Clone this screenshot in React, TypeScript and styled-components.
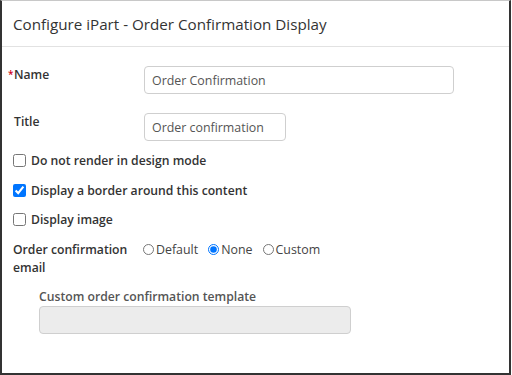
import React from "react";
import styled, { createGlobalStyle } from "styled-components";

const GlobalStyle = createGlobalStyle`
  html, body {
    margin: 0;
    padding: 0;
    background: #ffffff;
  }
  body {
    font-family: "Open Sans", "Liberation Sans", sans-serif;
    color: #333;
  }
`;

const Panel = styled.div`
  box-sizing: border-box;
  width: 511px;
  height: 375px;
  border-top: 1px solid #c8c8c8;
  border-left: 2px solid #333;
  border-right: 2px solid #333;
  border-bottom: 2px solid #333;
  background: #fff;
`;

const Header = styled.div`
  height: 45px;
  display: flex;
  align-items: center;
  padding: 0 11px;
  border-bottom: 1px solid #e2e2e2;
  font-size: 15.2px;
  color: #333;
`;

const Body = styled.div`
  padding: 19px 11px 0 11px;
  display: flex;
  flex-direction: column;
`;

const FieldRow = styled.div<{ $gap?: number; $top?: number }>`
  display: grid;
  grid-template-columns: 131px 1fr;
  align-items: start;
  margin-top: ${(p) => p.$top ?? 0}px;
  margin-bottom: ${(p) => p.$gap ?? 0}px;
`;

const Label = styled.label<{ $flush?: boolean }>`
  font-size: 12.2px;
  font-weight: 600;
  color: #333;
  line-height: 18px;
  padding-left: ${(p) => (p.$flush ? 0 : 1)}px;
  position: relative;
`;

const Required = styled.span`
  position: absolute;
  left: -5px;
  top: -1px;
  color: #d0021b;
  font-size: 10px;
`;

const TextInput = styled.input<{ $width: number }>`
  box-sizing: border-box;
  width: ${(p) => p.$width}px;
  height: 28px;
  border: 1px solid #cfcfcf;
  border-radius: 4px;
  padding: 0 7px;
  font-family: inherit;
  font-size: 12.4px;
  color: #555;
  background: #fff;
  outline: none;
`;

const CheckRow = styled.label`
  display: flex;
  align-items: center;
  gap: 5px;
  height: 29.5px;
  font-size: 12.2px;
  font-weight: 600;
  color: #333;

  input {
    margin: 0;
    width: 13px;
    height: 13px;
  }
`;

const RadioGroup = styled.div`
  display: flex;
  align-items: center;
  gap: 10px;
  height: 18px;
  margin-left: -1px;
`;

const RadioOption = styled.label`
  display: flex;
  align-items: center;
  gap: 2px;
  font-size: 12.4px;
  color: #444;

  input {
    margin: 0;
    width: 11px;
    height: 11px;
  }
`;

const SubSection = styled.div`
  padding-left: 26px;
  margin-top: 11px;
  display: flex;
  flex-direction: column;
  gap: 1px;
`;

const SubLabel = styled.div`
  font-size: 12.2px;
  font-weight: 600;
  color: #555;
`;

const DisabledInput = styled.div`
  box-sizing: border-box;
  width: 312px;
  height: 28px;
  border: 1px solid #cfcfcf;
  border-radius: 4px;
  background: #ececec;
`;

const App = () => {
  return (
    <>
      <GlobalStyle />
      <Panel>
        <Header>Configure iPart - Order Confirmation Display</Header>
        <Body>
          <FieldRow $gap={19}>
            <Label>
              <Required>*</Required>Name
            </Label>
            <TextInput $width={310} defaultValue="Order Confirmation" />
          </FieldRow>
          <FieldRow $gap={5}>
            <Label>Title</Label>
            <TextInput $width={142} defaultValue="Order confirmation" />
          </FieldRow>
          <CheckRow>
            <input type="checkbox" />
            Do not render in design mode
          </CheckRow>
          <CheckRow>
            <input type="checkbox" defaultChecked />
            Display a border around this content
          </CheckRow>
          <CheckRow>
            <input type="checkbox" />
            Display image
          </CheckRow>
          <FieldRow $top={6}>
            <Label $flush>
              Order confirmation
              <br />
              email
            </Label>
            <RadioGroup>
              <RadioOption>
                <input type="radio" name="email" />
                Default
              </RadioOption>
              <RadioOption>
                <input type="radio" name="email" defaultChecked />
                None
              </RadioOption>
              <RadioOption>
                <input type="radio" name="email" />
                Custom
              </RadioOption>
            </RadioGroup>
          </FieldRow>
          <SubSection>
            <SubLabel>Custom order confirmation template</SubLabel>
            <DisabledInput />
          </SubSection>
        </Body>
      </Panel>
    </>
  );
};

export default App;
